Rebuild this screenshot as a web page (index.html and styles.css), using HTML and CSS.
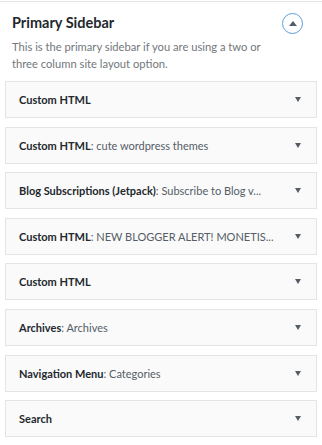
FILE: index.html
```html
<!DOCTYPE html>
<html lang="en">
<head>
  <meta charset="UTF-8" />
  <meta name="viewport" content="width=device-width, initial-scale=1.0"/>
  <title>Widgets</title>
  <link rel="stylesheet" href="styles.css">
</head>
<body>
  <div class="sidebar">
    <div class="sidebar-head">
      <h2 class="sidebar-title">Primary Sidebar</h2>
      <button class="toggle" aria-label="Collapse">
        <svg width="8" height="5" viewBox="0 0 8 5"><path d="M0 5 L4 0 L8 5 Z" fill="#555d66"/></svg>
      </button>
    </div>
    <p class="sidebar-desc">This is the primary sidebar if you are using a two or three column site layout option.</p>

    <div class="widget-list">
      <div class="widget"><span class="widget-name">Custom HTML</span><span class="arrow"></span></div>
      <div class="widget"><span class="widget-name">Custom HTML<span class="in-title">: cute wordpress themes</span></span><span class="arrow"></span></div>
      <div class="widget"><span class="widget-name">Blog Subscriptions (Jetpack)<span class="in-title">: Subscribe to Blog v...</span></span><span class="arrow"></span></div>
      <div class="widget"><span class="widget-name">Custom HTML<span class="in-title">: NEW BLOGGER ALERT! MONETIS...</span></span><span class="arrow"></span></div>
      <div class="widget"><span class="widget-name">Custom HTML</span><span class="arrow"></span></div>
      <div class="widget"><span class="widget-name">Archives<span class="in-title">: Archives</span></span><span class="arrow"></span></div>
      <div class="widget"><span class="widget-name">Navigation Menu<span class="in-title">: Categories</span></span><span class="arrow"></span></div>
      <div class="widget"><span class="widget-name">Search</span><span class="arrow"></span></div>
    </div>
  </div>
</body>
</html>
```

FILE: styles.css
```css
:root {
  --text: #23282d;
  --muted: #72777c;
  --border: #e2e4e7;
  --blue: #5b9dd9;
}
html, body {
  margin: 0; padding: 0;
  background: #fff;
  font-family: 'Lato', 'Open Sans', Arial, sans-serif;
  color: var(--text);
}
.sidebar {
  border-top: 1px solid #e5e5e5;
  margin-top: 1px;
  padding: 0 5px 0 5px;
}
.sidebar-head {
  display: flex;
  align-items: center;
  justify-content: space-between;
  padding: 10px 14px 0 7px;
}
.sidebar-title {
  margin: 0;
  font-size: 14.5px;
  font-weight: 700;
  line-height: 22px;
}
.toggle {
  width: 21px; height: 21px;
  padding: 0;
  border: 1px solid var(--blue);
  border-radius: 50%;
  background: #fff;
  display: flex;
  align-items: center;
  justify-content: center;
}
.sidebar-desc {
  margin: 4px 0 0 7px;
  font-size: 11.2px;
  line-height: 17px;
  color: var(--muted);
  max-width: 260px;
}
.widget-list {
  display: flex;
  flex-direction: column;
  gap: 8.6px;
  margin-top: 9px;
}
.widget {
  height: 37px;
  box-sizing: border-box;
  border: 1px solid var(--border);
  background: #fafafa;
  display: flex;
  align-items: center;
  justify-content: space-between;
  padding: 0 15px 0 13px;
}
.widget-name {
  font-size: 11px;
  font-weight: 700;
  white-space: nowrap;
}
.in-title {
  font-weight: 400;
  color: #555d66;
}
.arrow {
  width: 0; height: 0;
  border-left: 3.5px solid transparent;
  border-right: 3.5px solid transparent;
  border-top: 5px solid #555d66;
}
```
